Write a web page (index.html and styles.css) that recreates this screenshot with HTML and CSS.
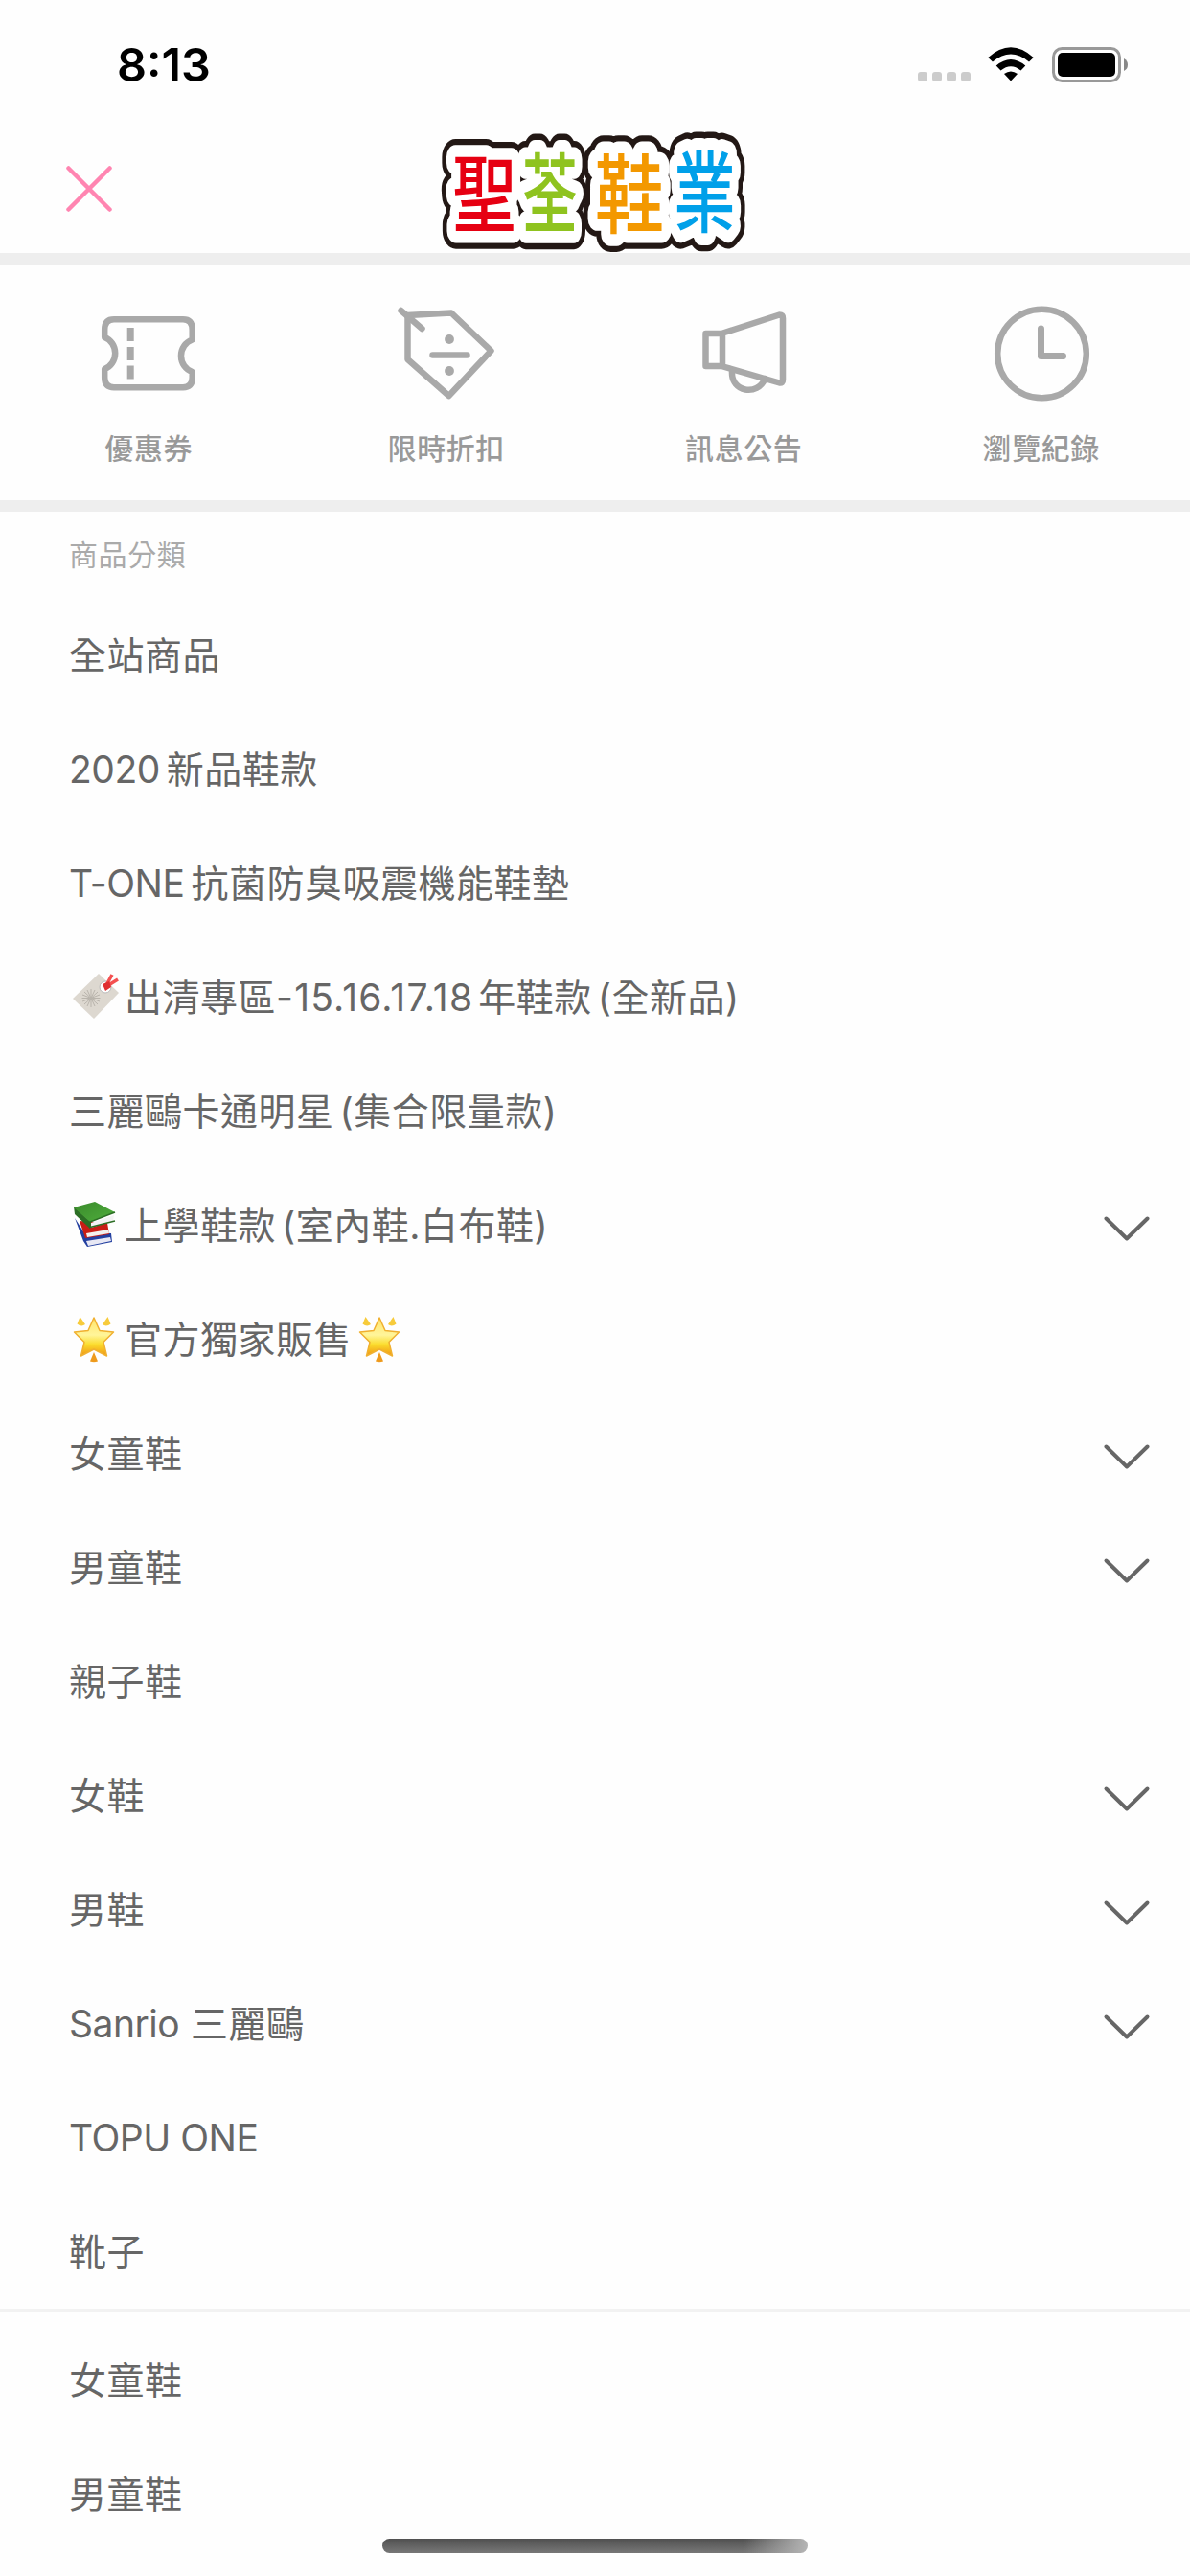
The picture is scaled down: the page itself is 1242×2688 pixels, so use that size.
FILE: index.html
```html
<!DOCTYPE html>
<html lang="zh-Hant">
<head>
    <meta charset="UTF-8">
    <title>聖荃鞋業</title>
    <link rel="stylesheet" href="styles.css">
</head>
<body>
    <svg class="defs" width="0" height="0">
        <defs>
            <linearGradient id="starFill" x1="0" y1="0" x2="0" y2="1">
                <stop offset="0" stop-color="#ffe36a"/>
                <stop offset=".45" stop-color="#fff59a"/>
                <stop offset=".7" stop-color="#fbdc2c"/>
                <stop offset="1" stop-color="#ef9413"/>
            </linearGradient>
            <linearGradient id="bookGreen" x1="0" y1="0" x2="1" y2="1">
                <stop offset="0" stop-color="#3a8a2c"/>
                <stop offset="1" stop-color="#4fae3c"/>
            </linearGradient>
            <symbol id="chevron" viewBox="0 0 50 30">
                <path d="M3.500 4.500 L25 25.500 L46.500 4.500"/>
            </symbol>
            <symbol id="star" viewBox="0 0 46 50">
                <path fill="url(#starFill)" stroke="#f0b030" stroke-width="1.500" stroke-linejoin="round" d="M23 3 L29 16.500 L43.500 18 L33 28.500 L36.500 43 L23 36 L9.500 43 L13 28.500 L2.500 18 L17 16.500 Z"/>
                <path fill="#f7cb3b" d="M8.500 2 L14 10 Q10 13 5.500 9.500 Z M37.500 2 L32 10 Q36 13 40.500 9.500 Z"/>
                <path fill="#ee9a1c" d="M23 39 L27 48.500 Q23 50 19 48.500 Z"/>
            </symbol>
        </defs>
    </svg>

    <div class="status-bar">
        <span class="time">8:13</span>
        <div class="status-icons">
            <div class="signal"><i></i><i></i><i></i><i></i></div>
            <svg class="wifi" width="48" height="36" viewBox="0 0 48 36">
                <path d="M.3 11 Q24 -10.500 47.700 11 L43 15.500 Q24 -.5 5 15.500 Z"/>
                <path d="M8.700 19.500 Q24 6.500 39.300 19.500 L34.500 24.500 Q24 16 13.500 24.500 Z"/>
                <path d="M17 28 Q24 23 31 28 L24 35.500 Z"/>
            </svg>
            <svg class="battery" width="80" height="38" viewBox="0 0 80 38">
                <rect x="1.500" y="1.500" width="69" height="34" rx="9" fill="none" stroke="#999" stroke-width="3"/>
                <rect x="6" y="6" width="60" height="25" rx="5"/>
                <path d="M75 12 Q79 14 79 18.500 Q79 23 75 25 Z" fill="#888"/>
            </svg>
        </div>
    </div>

    <header class="header">
        <svg class="close" width="48" height="48" viewBox="0 0 48 48">
            <path d="M2.500 2.500 L45.500 45.500 M45.500 2.500 L2.500 45.500"/>
        </svg>
        <svg class="logo" width="330" height="126" viewBox="0 0 330 126">
            <defs>
                <g id="logoText">
                    <text class="c1" transform="translate(15 104) scale(.93 1.25)">聖</text>
                    <text class="c2" transform="translate(88 105) scale(.8 1.28)">荃</text>
                    <text class="c3" transform="translate(164 104) scale(1 1.25)">鞋</text>
                    <text class="c4" transform="translate(246 103) scale(.9 1.28)">業</text>
                </g>
            </defs>
            <use href="#logoText" class="logo-outline"/>
            <use href="#logoText" class="logo-inner"/>
            <use href="#logoText" class="logo-fill"/>
        </svg>
    </header>

    <nav class="shortcuts">
        <a class="shortcut">
            <svg width="108" height="108" viewBox="0 0 108 108">
                <path d="M8.200 39 V31 Q8.200 20.300 18 20.300 H90 Q99.700 20.300 99.700 31 V41.500 A16.500 17.500 0 0 0 99.700 75 V81 Q99.700 91.200 90 91.200 H18 Q8.200 91.200 8.200 81 V72 A16.500 17.500 0 0 0 8.200 39 Z"/>
                <path d="M35.200 29 V43 M35.200 49 V63 M35.200 68.500 V82.500" stroke-width="7"/>
            </svg>
            <span>優惠券</span>
        </a>
        <a class="shortcut">
            <svg width="108" height="108" viewBox="-2.500 0 108 108">
                <path d="M11 16 L56.500 13.500 L98 53 L54 100 L11 62 Z"/>
                <path d="M4 11 L26 30 M37 57.500 H73"/>
                <circle class="dot" cx="54.500" cy="41" r="4.900"/>
                <circle class="dot" cx="54.500" cy="74" r="4.900"/>
            </svg>
            <span>限時折扣</span>
        </a>
        <a class="shortcut">
            <svg width="108" height="108" viewBox="-2.500 0 108 108">
                <path d="M12 35 H28.500 L89 15.500 Q92.500 15.500 92.500 19 V83.500 Q92.500 87 89 86.500 L28.500 69 H12 Z M29.500 35 V69"/>
                <path d="M39.500 75 C38.500 96 66 101 74 82"/>
            </svg>
            <span>訊息公告</span>
        </a>
        <a class="shortcut">
            <svg width="108" height="108" viewBox="-.5 0 108 108">
                <circle cx="54" cy="56" r="46.300"/>
                <path d="M53 30 V58.500 H76" stroke-width="7"/>
            </svg>
            <span>瀏覽紀錄</span>
        </a>
    </nav>

    <h2 class="section-title">商品分類</h2>

    <ul class="menu">
        <li><span>全站商品</span></li>
        <li><span><b class="num">2020</b>新品鞋款</span></li>
        <li><span><b class="cap">T-ONE</b>抗菌防臭吸震機能鞋墊</span></li>
        <li>
            <svg class="emoji" width="50" height="50" viewBox="0 0 50 50">
                <path fill="#ddd8d0" d="M28 1 L49 21 L23 48 L1 27 Z"/>
                <path d="M20 17 V36 M10.500 26.500 H29.500 M13 20 L27 33 M27 20 L13 33 M16 18 L24 35 M24 18 L16 35 M11 23 L29 30 M29 23 L11 30" stroke="#b9b4ac" stroke-width="1"/>
                <circle cx="35" cy="15" r="6" fill="#fff" stroke="#bbb"/>
                <path d="M35 15 L42 2 M35 15 L48 7" stroke="#f45050" stroke-width="3.500"/>
                <path d="M32 12 L39 9 L41 15 L35 19 Z" fill="#df2f31"/>
            </svg>
            <span>出清專區<b class="years">-15.16.17.18</b>年鞋款<b class="paren">(</b>全新品<b class="end">)</b></span>
        </li>
        <li><span>三麗鷗卡通明星<b class="paren">(</b>集合限量款<b class="end">)</b></span></li>
        <li>
            <svg class="emoji" width="50" height="50" viewBox="0 0 50 50">
                <path fill="#2440a0" d="M3 18 L12 42 L16 48 L42 43 L41 34 L12 32 Z"/>
                <path fill="#e8e8f4" d="M15 42 L40 38 L41 42 L17 47 Z"/>
                <path fill="#c91d15" d="M8 21 L37 23 L39 35 L14 39 Z"/>
                <path fill="#f3f1ee" d="M15 34 L38 30 L39 34 L16 38 Z"/>
                <path fill="#2c6e25" d="M2 6 L20 22 L19 29 L3 14 Z"/>
                <path fill="url(#bookGreen)" d="M2 7 L24 1 L45 12 L19 22 Z"/>
                <path fill="#f3f3f3" d="M20 23 L44 15 L43 21 L20 28 Z"/>
                <path fill="none" stroke="#2c6e25" stroke-width="1.500" d="M45 12 L19 22 V27.500 L45 21"/>
            </svg>
            <span>上學鞋款<b class="paren">(</b>室內鞋<b class="point">.</b>白布鞋<b class="end">)</b></span>
            <svg class="chevron"><use href="#chevron"/></svg>
        </li>
        <li>
            <svg class="emoji" width="50" height="50"><use href="#star" width="46" height="50"/></svg>
            <span>官方獨家販售</span>
            <svg class="emoji tail" width="50" height="50"><use href="#star" width="46" height="50"/></svg>
        </li>
        <li><span>女童鞋</span><svg class="chevron"><use href="#chevron"/></svg></li>
        <li><span>男童鞋</span><svg class="chevron"><use href="#chevron"/></svg></li>
        <li><span>親子鞋</span></li>
        <li><span>女鞋</span><svg class="chevron"><use href="#chevron"/></svg></li>
        <li><span>男鞋</span><svg class="chevron"><use href="#chevron"/></svg></li>
        <li><span><b class="word">Sanrio</b>三麗鷗</span><svg class="chevron"><use href="#chevron"/></svg></li>
        <li><span><b class="brand">TOPU ONE</b></span></li>
        <li><span>靴子</span></li>
    </ul>

    <ul class="menu menu-extra">
        <li><span>女童鞋</span></li>
        <li><span>男童鞋</span></li>
    </ul>

    <div class="home-indicator"></div>
</body>
</html>
```
FILE: styles.css
```css
* {
    box-sizing: border-box;
}

body {
    margin: 0;
    width: 1242px;
    height: 2688px;
    overflow: hidden;
    position: relative;
    background: #fefefe;
    color: #666;
    font-family: Inter, "Noto Sans CJK TC", sans-serif;
}

.defs {
    position: absolute;
}

svg {
    flex: none;
}

.status-bar {
    height: 132px;
    padding: 0 64px 0 122px;
    display: flex;
    justify-content: space-between;
    color: #000;
}

.time {
    font-size: 48.5px;
    line-height: 136px;
    font-weight: 600;
}

.status-icons {
    display: flex;
    align-items: flex-start;
    padding-top: 49px;
}

.signal {
    display: flex;
    gap: 5px;
    padding-top: 26px;
}

.signal i {
    width: 10px;
    height: 10px;
    border-radius: 3px;
    background: #ccc;
}

.wifi {
    margin-left: 18px;
}

.battery {
    margin-left: 19px;
}

.header {
    height: 144px;
    padding: 0 69px;
    display: flex;
    border-bottom: 12px solid #eee;
}

.close {
    margin-top: 41px;
    fill: none;
    stroke: #ff85b1;
    stroke-width: 4.5;
    stroke-linecap: round;
}

.logo {
    margin-left: 340px;
    overflow: visible;
}

.logo text {
    font-family: "Noto Sans CJK TC", sans-serif;
    font-size: 72px;
    font-weight: 500;
}

.logo-outline {
    fill: #231815;
    stroke: #231815;
    stroke-width: 30px;
    stroke-linejoin: round;
}

.logo-inner {
    fill: #fff;
    stroke: #fff;
    stroke-width: 20px;
    stroke-linejoin: round;
}

/* only the top layer gets the per-character colours */
.logo-fill {
    --c1: #e60012;
    --c2: #8fc31f;
    --c3: #f39800;
    --c4: #00a0e9;
}

.c1 { fill: var(--c1, inherit); }
.c2 { fill: var(--c2, inherit); }
.c3 { fill: var(--c3, inherit); }
.c4 { fill: var(--c4, inherit); }

.shortcuts {
    height: 258px;
    display: grid;
    grid-template-columns: repeat(4, 1fr);
    border-bottom: 12px solid #eee;
}

.shortcut {
    display: flex;
    flex-direction: column;
    align-items: center;
    padding-top: 37px;
    color: #999;
    font-size: 30px;
    font-weight: 500;
    letter-spacing: .6px;
    line-height: 44px;
}

.shortcut svg {
    margin-bottom: 25px;
    fill: none;
    stroke: #a9a9a9;
    stroke-width: 6.5;
    stroke-linejoin: round;
}

.shortcut:not(:first-child) svg {
    stroke-linecap: round;
}

.shortcut .dot {
    fill: #a9a9a9;
    stroke: none;
}

.section-title {
    margin: 0;
    height: 90px;
    padding-left: 72px;
    line-height: 90px;
    color: #aaa;
    font-size: 30px;
    font-weight: 400;
    letter-spacing: .6px;
}

.menu {
    list-style: none;
    margin: 0;
    padding: 0;
}

.menu li {
    height: 119px;
    padding: 0 43px 0 72px;
    display: flex;
    align-items: center;
    font-size: 39px;
    line-height: 118px;
    letter-spacing: .5px;
    white-space: nowrap;
}

.menu b {
    font-weight: 400;
}

.menu .num, .menu .cap, .menu .word, .menu .brand {
    letter-spacing: -.5px;
}

.menu .num, .menu .cap {
    margin-right: 7px;
}

.menu .years {
    letter-spacing: 1.2px;
    margin-right: 5px;
}

.menu .paren {
    margin-left: 6px;
}

.menu .word {
    margin-right: 12px;
}

.emoji {
    margin: -2px 5px 0 3px;
}

.emoji + span {
    margin-left: 0;
}

.emoji.tail {
    margin-left: 6px;
}

.chevron {
    width: 50px;
    height: 30px;
    margin: 7px -2px 0 auto;
    fill: none;
    stroke: #666;
    stroke-width: 4;
    stroke-linecap: round;
    stroke-linejoin: round;
}

.menu-extra {
    border-top: 3px solid #f2f2f2;
    padding-top: 12px;
}

/* sits over the scrolling menu */
.home-indicator {
    position: absolute;
    left: 399px;
    bottom: 24px;
    width: 444px;
    height: 15px;
    border-radius: 8px;
    background: linear-gradient(90deg, transparent 85%, #b5b5b5), linear-gradient(#505050, #777);
}
```
